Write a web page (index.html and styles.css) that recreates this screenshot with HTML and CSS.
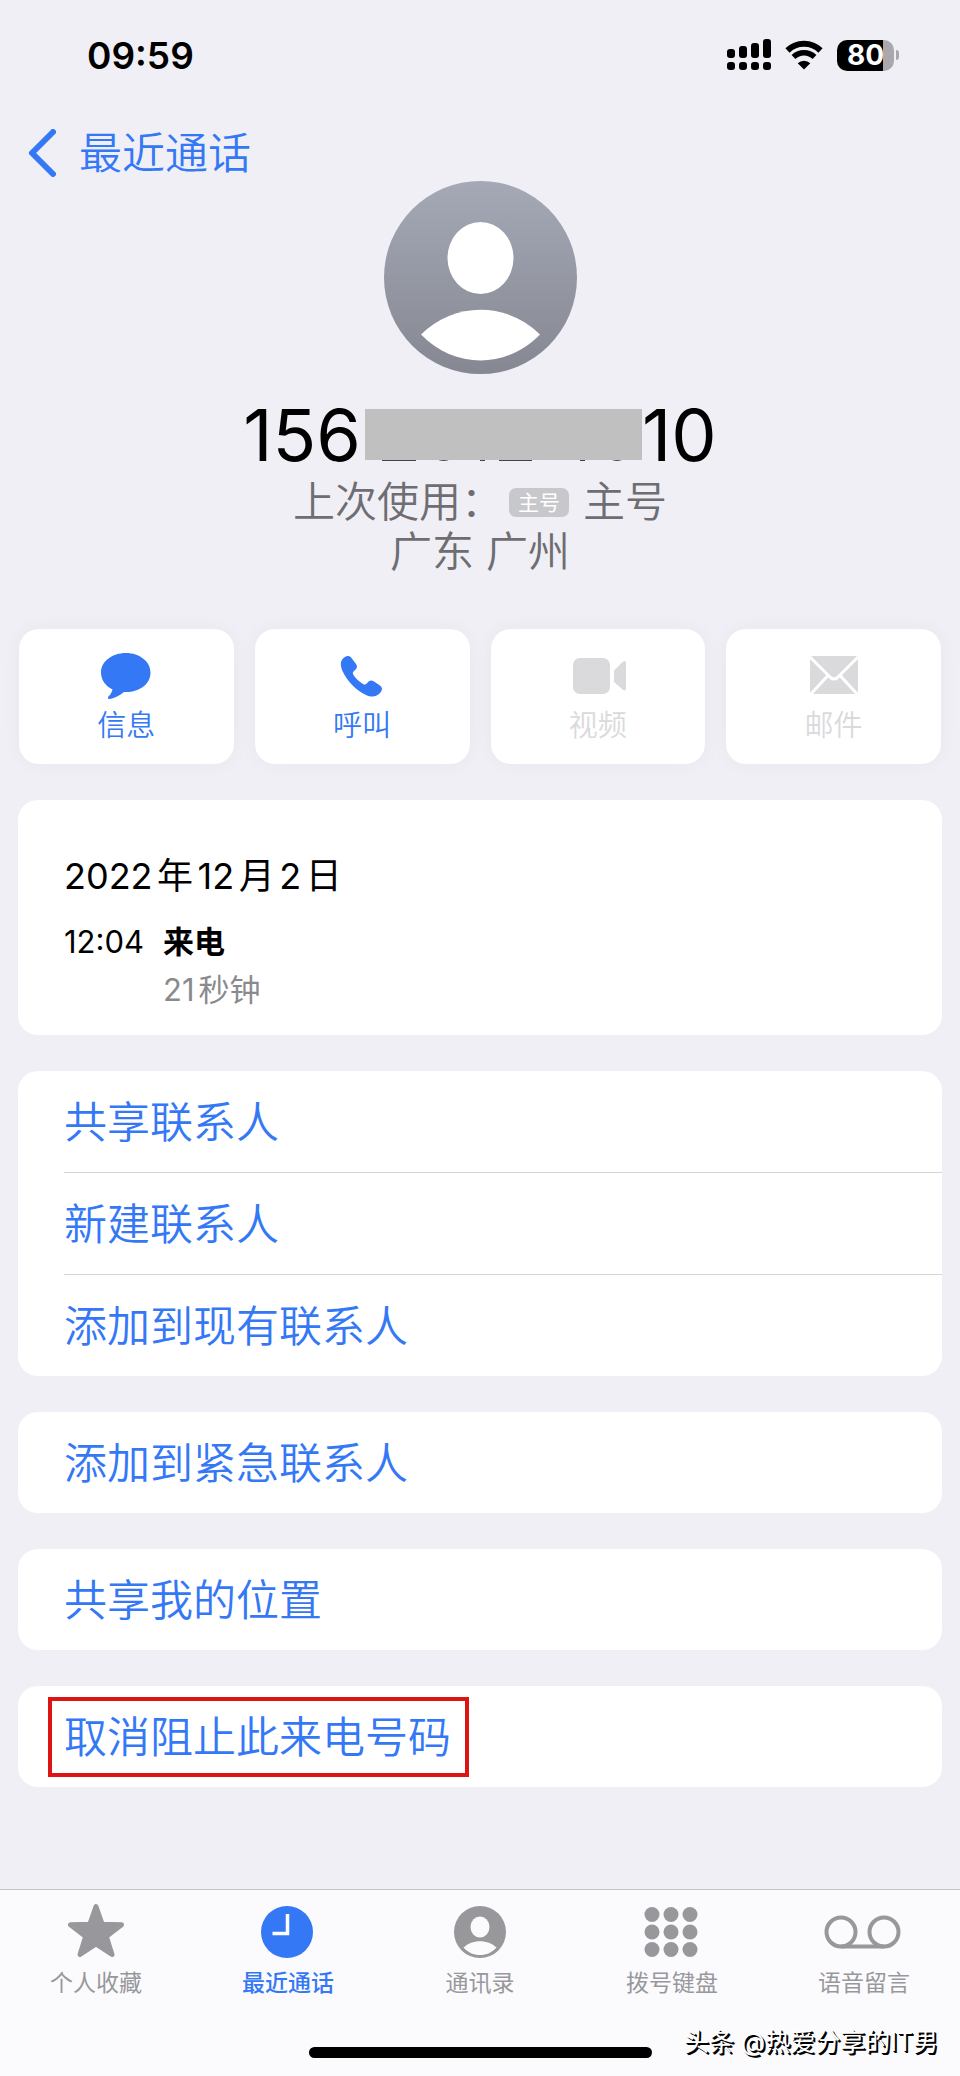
FILE: index.html
```html
<!DOCTYPE html>
<html lang="zh-CN">
<head>
<meta charset="utf-8">
<meta name="viewport" content="width=device-width, initial-scale=1">
<title>最近通话</title>
<link rel="stylesheet" href="styles.css">
</head>
<body>
<div class="screen">
  <header class="status">
    <time class="clock">09:59</time>
    <div class="indicators">
      <svg class="signal" width="44" height="32" viewBox="0 0 44 32" aria-label="信号">
        <rect x="0" y="10" width="8" height="9" rx="3"/><rect x="12" y="7" width="8" height="12" rx="3"/><rect x="24" y="4" width="8" height="15" rx="3"/><rect x="36" y="0" width="8" height="19" rx="3"/>
        <rect x="0" y="23" width="8" height="8" rx="3"/><rect x="12" y="23" width="8" height="8" rx="3"/><rect x="24" y="23" width="8" height="8" rx="3"/><rect x="36" y="23" width="8" height="8" rx="3"/>
      </svg>
      <svg class="wifi" width="38" height="30" viewBox="0 0 38 30" aria-label="无线网络">
        <path d="M2.500 10.500A23.500 23.500 0 0 1 35.500 10.500" fill="none" stroke="#000" stroke-width="6"/>
        <path d="M8.500 17A15 15 0 0 1 29.500 17" fill="none" stroke="#000" stroke-width="5.500"/>
        <path d="M19 29.500L12.700 23.200A9 9 0 0 1 25.300 23.200Z"/>
      </svg>
      <div class="battery"><span class="battery-body">80</span><span class="battery-tip"></span></div>
    </div>
  </header>

  <nav class="nav">
    <a class="back" href="#">
      <svg width="28" height="48" viewBox="0 0 28 48" aria-hidden="true"><path d="M25 3L4 24L25 45" fill="none" stroke="#3478f6" stroke-width="6" stroke-linecap="round" stroke-linejoin="round"/></svg>
      最近通话
    </a>
  </nav>

  <main class="content">
    <section class="profile">
      <svg class="avatar" width="193" height="193" viewBox="0 0 193 193" aria-hidden="true">
        <defs><linearGradient id="shade" x1="0" y1="0" x2="0" y2="1"><stop offset="0" stop-color="#a5a9b6"/><stop offset="1" stop-color="#858892"/></linearGradient></defs>
        <circle cx="96.500" cy="96.500" r="96.500" fill="url(#shade)"/>
        <ellipse cx="96.500" cy="77" rx="33" ry="36" fill="#fff"/>
        <path d="M37 153.500C70 120.500 123 120.500 156 153.500C123 188 70 188 37 153.500Z" fill="#fff"/>
      </svg>
      <h1 class="number">
        <span>156</span>
        <svg class="mask" viewBox="0 0 277 53" width="277" height="53" aria-label="已隐藏">
          <path d="M17 50H51V52H17ZM71 50H86Q79 54 71 50ZM115 50H120V52H115ZM134 50H167V52H134ZM215 50H220V52H215ZM245 50H259Q252 54 245 50Z" fill="#444"/>
          <rect width="277" height="51" fill="#c0c0c0"/>
        </svg>
        <span>10</span>
      </h1>
      <p class="sub">上次使用：<span class="sim">主号</span>主号</p>
      <p class="sub">广东 广州</p>
    </section>

    <section class="actions">
      <button class="action" type="button">
        <svg width="54" height="48" viewBox="0 0 54 48" aria-hidden="true"><path d="M27 1C40.500 1 51.500 9.500 51.500 20.500C51.500 32 41 40 27 40H25C20 44 15 46.500 10.500 47C8.500 47.200 8.500 45.500 9.500 44.500C11.500 42.500 13 40 13.500 37.500C6.500 34 2 28 2 20.500C2 9.500 13 1 27 1Z"/></svg>
        信息
      </button>
      <button class="action" type="button">
        <svg width="54" height="48" viewBox="0 0 54 48" aria-hidden="true"><path d="M8 6.500C11 3.500 14 3 16.500 6L21 12C23 15 21.500 17 19 19C17.500 20.200 17.500 21.500 18.500 23C21 27 24 29.500 28 32C29.500 33 30.700 32.700 31.800 31.500C34 28.500 36 27.500 39 29.500L45 33.500C48 36 47.500 38.500 44.500 41.500C41 45 36.500 45.500 31 43C21 38.500 12 29 7.500 19C5.500 14.500 5 9.500 8 6.500Z"/></svg>
        呼叫
      </button>
      <button class="action" type="button" disabled>
        <svg width="54" height="48" viewBox="0 0 54 48" aria-hidden="true"><rect x="2" y="6" width="37" height="36" rx="7"/><path d="M43 18.500L51.500 10Q55 7.500 55 11V36Q55 40 51.500 37.500L43 30Z"/></svg>
        视频
      </button>
      <button class="action" type="button" disabled>
        <svg width="54" height="48" viewBox="0 0 54 48" aria-hidden="true"><rect x="3" y="4" width="48" height="38" rx="2"/><path d="M2 4L23.500 25.500Q27 28.500 30.500 25.500L52 4M3 43L20.500 24M51 43L33.500 24" fill="none" stroke="#fff" stroke-width="3"/></svg>
        邮件
      </button>
    </section>

    <section class="card log">
      <h2 class="date">2022年12月2日</h2>
      <div class="call">
        <time>12:04</time><strong>来电</strong>
        <span class="duration">21秒钟</span>
      </div>
    </section>

    <ul class="card menu">
      <li><button class="row" type="button">共享联系人</button></li>
      <li><button class="row" type="button">新建联系人</button></li>
      <li><button class="row" type="button">添加到现有联系人</button></li>
    </ul>
    <ul class="card menu"><li><button class="row" type="button">添加到紧急联系人</button></li></ul>
    <ul class="card menu"><li><button class="row" type="button">共享我的位置</button></li></ul>
    <ul class="card menu"><li><button class="row" type="button"><span class="marked">取消阻止此来电号码</span></button></li></ul>
  </main>

  <footer class="bottom">
    <nav class="tabs">
      <a class="tab" href="#">
        <svg width="80" height="56" viewBox="0 0 80 56" aria-hidden="true"><path d="M40 3.500L46.200 21.300L65.500 21.800L50.300 33.400L56 51.500L40 41L24 51.500L29.700 33.400L14.500 21.800L33.800 21.300Z" stroke="#98989c" stroke-width="5" stroke-linejoin="round"/></svg>
        个人收藏
      </a>
      <a class="tab current" href="#" aria-current="page">
        <svg width="80" height="56" viewBox="0 0 80 56" aria-hidden="true"><circle cx="39" cy="29" r="26"/><path d="M39.500 11V30.500H24.500" fill="none" stroke="#fff" stroke-width="3.500"/></svg>
        最近通话
      </a>
      <a class="tab" href="#">
        <svg width="80" height="56" viewBox="0 0 80 56" aria-hidden="true"><circle cx="40" cy="29" r="26"/><ellipse cx="40" cy="24" rx="9.500" ry="10.500" fill="#fbfbfd"/><path d="M23.500 44.500C32 36 48 36 56.500 44.500C48 54.500 32 54.500 23.500 44.500Z" fill="#fbfbfd"/></svg>
        通讯录
      </a>
      <a class="tab" href="#">
        <svg width="80" height="56" viewBox="0 0 80 56" aria-hidden="true"><circle cx="20" cy="11.500" r="7.500"/><circle cx="39" cy="11.500" r="7.500"/><circle cx="58" cy="11.500" r="7.500"/><circle cx="20" cy="29" r="7.500"/><circle cx="39" cy="29" r="7.500"/><circle cx="58" cy="29" r="7.500"/><circle cx="20" cy="46.500" r="7.500"/><circle cx="39" cy="46.500" r="7.500"/><circle cx="58" cy="46.500" r="7.500"/></svg>
        拨号键盘
      </a>
      <a class="tab" href="#">
        <svg width="80" height="56" viewBox="0 0 80 56" aria-hidden="true"><g fill="none" stroke="#98989c" stroke-width="4"><circle cx="17" cy="29" r="14.500"/><circle cx="60" cy="29" r="14.500"/><path d="M17 43.500H60"/></g></svg>
        语音留言
      </a>
    </nav>
    <div class="home"></div>
    <p class="watermark">头条 @热爱分享的IT男</p>
  </footer>
</div>
</body>
</html>
```
FILE: styles.css
```css
* { box-sizing: border-box; }

body {
  margin: 0;
  background: #f0eff5;
  color: #000;
  font-family: Inter, "Noto Sans CJK SC", sans-serif;
  font-weight: 350;
  text-autospace: normal;
}

h1, h2, p, ul { margin: 0; padding: 0; font-weight: inherit; }
ul { list-style: none; }
a { color: inherit; text-decoration: none; }
button { font: inherit; border: 0; background: none; cursor: pointer; }
svg { flex: none; }

.screen {
  min-height: 100vh;
  display: flex;
  flex-direction: column;
}

.status {
  height: 110px;
  padding: 0 61px 0 87px;
  display: flex;
  align-items: center;
  justify-content: space-between;
}
.clock { font-size: 37px; font-weight: 600; }
.indicators { display: flex; align-items: center; gap: 14px; }
.battery { display: flex; align-items: center; gap: 2px; }
.battery-body {
  width: 57px;
  height: 31px;
  border-radius: 10px;
  background: linear-gradient(to right, #000 80%, #a9a9ad 80%);
  color: #fff;
  font-size: 28px;
  font-weight: 700;
  line-height: 31px;
  text-align: center;
}
.battery-tip {
  width: 3px;
  height: 10px;
  border-radius: 0 3px 3px 0;
  background: #a9a9ad;
}

.nav { padding: 15px 28px 0; }
.back {
  display: inline-flex;
  align-items: center;
  gap: 23px;
  color: #3478f6;
  font-size: 43px;
  line-height: 56px;
}

.content { padding: 0 18px 36px; }
.profile {
  display: flex;
  flex-direction: column;
  align-items: center;
}
.number {
  margin-top: 19px;
  display: flex;
  align-items: center;
  font-size: 72px;
  font-weight: 400;
  line-height: 84px;
}
.mask { margin-left: 4px; }
.sub {
  display: flex;
  align-items: center;
  color: #6d6d72;
  font-size: 42px;
  line-height: 50px;
  white-space: pre;
}
.sim {
  margin: 0 14px 0 6px;
  padding: 0 9px;
  border-radius: 7px;
  background: #c7c7cc;
  color: #fff;
  font-size: 21px;
  font-weight: 400;
  line-height: 29px;
}

.actions {
  margin: 52px 1px 36px;
  display: grid;
  grid-template-columns: repeat(4, 1fr);
  gap: 21px;
}
.action {
  height: 135px;
  padding: 23px 0 0;
  display: flex;
  flex-direction: column;
  align-items: center;
  gap: 6px;
  border-radius: 20px;
  background: #fff;
  box-shadow: 0 0 20px rgb(60 60 90 / 4%);
  color: #3478f6;
  fill: #3478f6;
  font-size: 29px;
  line-height: 40px;
}
.action svg { overflow: visible; }
.action:disabled { color: #dadadc; fill: #dadadc; cursor: default; }

.card {
  border-radius: 20px;
  background: #fff;
}
.card + .card { margin-top: 36px; }

.log { padding: 50px 46px 21px; }
.date { font-size: 36px; font-weight: 400; line-height: 52px; }
.call {
  margin-top: 16px;
  display: grid;
  grid-template-columns: 99px 1fr;
  font-size: 31px;
  font-weight: 400;
  line-height: 48px;
}
.call strong { font-weight: 700; }
.duration { grid-column: 2; color: #8a8a8e; }

.menu { padding-left: 46px; }
.menu li + li { border-top: 1px solid #d4d4d6; }
.row {
  width: 100%;
  height: 101px;
  padding: 0;
  display: flex;
  align-items: center;
  color: #3478f6;
  font-size: 43px;
  line-height: 72px;
}
.marked {
  margin-left: -16px;
  padding: 0 14px 0 12px;
  border: 4px solid #dc1414;
}

.bottom {
  position: relative;
  height: 187px;
  margin-top: auto;
  border-top: 1px solid #c4c4c8;
  background: #fbfbfd;
}
.tabs {
  padding-top: 13px;
  display: grid;
  grid-template-columns: repeat(5, 1fr);
}
.tab {
  display: flex;
  flex-direction: column;
  align-items: center;
  gap: 8px;
  color: #98989c;
  fill: #98989c;
  font-size: 23px;
  font-weight: 400;
  line-height: 32px;
}
.tab.current { color: #3478f6; fill: #3478f6; font-weight: 500; }
.home {
  width: 343px;
  height: 11px;
  margin: 48px auto 0;
  border-radius: 6px;
  background: #000;
}
.watermark {
  position: absolute;
  right: 22px;
  bottom: 16px;
  color: #fff;
  font-size: 25px;
  font-weight: 400;
  line-height: 36px;
  text-autospace: no-autospace;
  text-shadow: 1px 1px 0 #000, 2px 2px 0 #000;
}
```
